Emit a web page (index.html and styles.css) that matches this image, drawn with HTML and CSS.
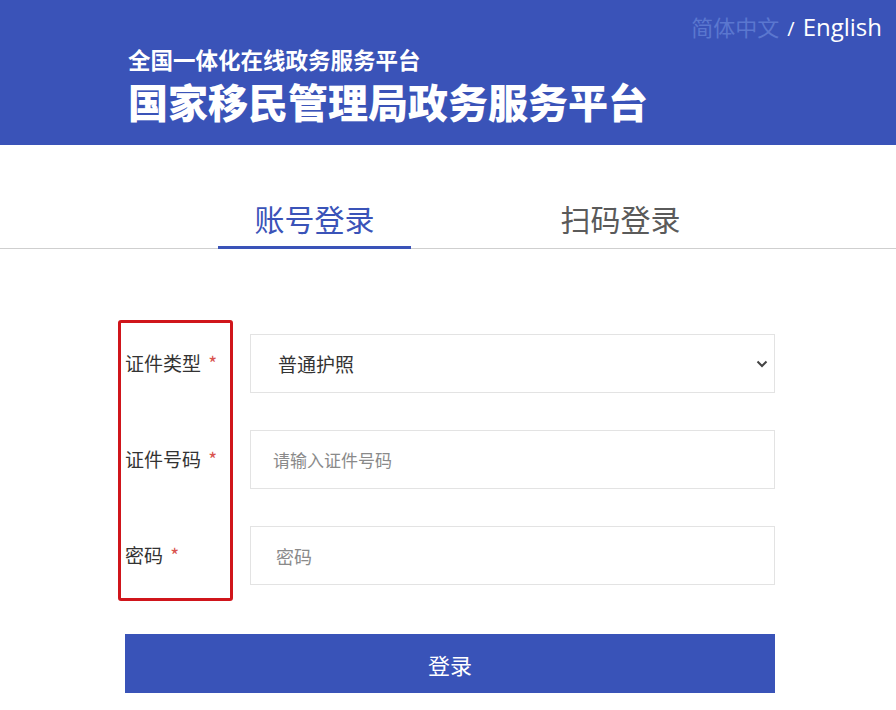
FILE: index.html
```html
<!DOCTYPE html>
<html lang="zh-CN">
<head>
<meta charset="utf-8">
<title>国家移民管理局政务服务平台</title>
<link rel="stylesheet" href="styles.css">
</head>
<body>
<header class="top">
  <div class="brand">
    <div class="brand-sub">全国一体化在线政务服务平台</div>
    <div class="brand-main">国家移民管理局政务服务平台</div>
  </div>
  <div class="lang">
    <span class="lang-cn">简体中文</span>
    <span class="lang-sep">/</span>
    <span class="lang-en">English</span>
  </div>
</header>

<nav class="tabs">
  <div class="tab active">账号登录</div>
  <div class="tab">扫码登录</div>
</nav>

<form class="login">
  <div class="mark"></div>
  <div class="row">
    <label class="label">证件类型 <span class="req">*</span></label>
    <div class="field field-select">
      <span class="select-text">普通护照</span>
      <svg class="chev" width="12" height="8" viewBox="0 0 12 8"><path d="M1.5 1.5 L6 6 L10.5 1.5" fill="none" stroke="#444" stroke-width="2"/></svg>
    </div>
  </div>
  <div class="row">
    <label class="label">证件号码 <span class="req">*</span></label>
    <input class="field field-id" type="text" placeholder="请输入证件号码">
  </div>
  <div class="row">
    <label class="label">密码 <span class="req">*</span></label>
    <input class="field field-pw" type="password" placeholder="密码">
  </div>
  <button class="submit" type="button">登录</button>
</form>
</body>
</html>
```

FILE: styles.css
```css
* { box-sizing: border-box; }
body {
  margin: 0;
  background: #fff;
  font-family: "Noto Sans CJK SC", "Noto Sans", sans-serif;
  color: #333;
  width: 896px;
  height: 710px;
  overflow: hidden;
}
.top {
  height: 145px;
  background: #3a53b8;
  display: flex;
  justify-content: space-between;
  padding-left: 128px;
}
.brand { padding-top: 46px; color: #fff; }
.brand-sub {
  font-size: 22.5px;
  font-weight: 700;
  line-height: 26px;
}
.brand-main {
  font-size: 40px;
  font-weight: 900;
  line-height: 44px;
  margin-top: 7px;
}
.lang {
  padding-top: 10px;
  padding-right: 14px;
  display: flex;
  align-items: baseline;
  gap: 8px;
  height: 40px;
}
.lang-cn { color: #5b77cf; font-size: 22px; }
.lang-sep { color: #fff; font-size: 20px; font-family: "Open Sans", sans-serif; }
.lang-en { color: #fff; font-size: 24px; font-family: "Open Sans", sans-serif; }

.tabs {
  display: flex;
  gap: 113px;
  padding-left: 218px;
  margin-top: 53px;
  border-bottom: 1px solid #cfcfcf;
  height: 51px;
}
.tab {
  width: 193px;
  text-align: center;
  font-size: 30px;
  line-height: 40px;
  padding-bottom: 8px;
  height: 51px;
  border-bottom: 3px solid transparent;
  color: #5a5a5a;
}
.tab.active { color: #3a53b8; border-bottom-color: #3a53b8; }

.login {
  position: relative;
  margin: 85px 0 0 125px;
  width: 650px;
  display: flex;
  flex-direction: column;
  gap: 37px;
}
.mark {
  position: absolute;
  left: -7px;
  top: -14px;
  width: 115px;
  height: 281px;
  border: 3px solid #d0151b;
  border-radius: 3px;
  pointer-events: none;
}
.row {
  display: flex;
  align-items: center;
  height: 59px;
}
.label {
  width: 125px;
  font-size: 19px;
  color: #333;
  margin-top: -2px;
}
.req { color: #d9534f; margin-left: 3px; }
.field {
  flex: 1;
  height: 59px;
  border: 1px solid #e3e3e3;
  background: #fff;
  font-family: inherit;
  outline: none;
}
.field-select {
  display: flex;
  align-items: center;
  justify-content: space-between;
  padding: 0 6px 0 27px;
}
.select-text { font-size: 19px; color: #333; }
.chev { margin-top: 1px; }
.field-id { padding-left: 22px; font-size: 17px; }
.field-pw { padding-left: 25px; font-size: 18px; }
.field::placeholder { color: #8a8a8a; }
.submit {
  margin-top: 12px;
  height: 59px;
  border: none;
  background: #3953b8;
  color: #fff;
  font-family: inherit;
  font-size: 22px;
}
```
